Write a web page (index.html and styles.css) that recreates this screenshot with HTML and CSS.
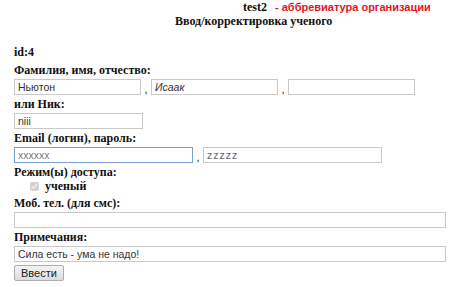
FILE: index.html
```html
<!DOCTYPE html>
<html lang="ru">
<head>
    <meta charset="UTF-8">
    <title>Ввод/корректировка ученого</title>
    <link rel="stylesheet" href="styles.css">
</head>
<body>

    <!-- Header -->
    <div class="org-line">
        <span class="org-code">test2</span>
        <span class="org-note">- аббревиатура организации</span>
    </div>
    <div class="page-title">Ввод/корректировка ученого</div>

    <!-- Scientist form -->
    <form class="sci-form">
        <div class="id-line">id:4</div>

        <div class="label">Фамилия, имя, отчество:</div>
        <div class="row">
            <input type="text" class="fld fld-name" value="Ньютон">
            <span class="sep">,</span>
            <input type="text" class="fld fld-name fld-italic" value="Исаак">
            <span class="sep">,</span>
            <input type="text" class="fld fld-name" value="">
        </div>

        <div class="label">или Ник:</div>
        <div class="row">
            <input type="text" class="fld fld-nick" value="niii">
        </div>

        <div class="label">Email (логин), пароль:</div>
        <div class="row">
            <input type="text" class="fld fld-mail focused" value="xxxxxx">
            <span class="sep">,</span>
            <input type="text" class="fld fld-mail fld-pass" value="zzzzz">
        </div>

        <div class="label">Режим(ы) доступа:</div>
        <label class="check-row">
            <input type="checkbox" checked disabled>
            <span>ученый</span>
        </label>

        <div class="label">Моб. тел. (для смс):</div>
        <div class="row">
            <input type="text" class="fld fld-wide" value="">
        </div>

        <div class="label">Примечания:</div>
        <div class="row">
            <input type="text" class="fld fld-wide" value="Сила есть - ума не надо!">
        </div>

        <button type="button" class="submit-btn">Ввести</button>
    </form>

</body>
</html>
```

FILE: styles.css
```css
/* Basic Styling */
body {
    font-family: "Liberation Serif", "Times New Roman", serif;
    font-size: 12px;
    color: #111;
    background-color: white;
    margin: 0;
    padding: 0;
}

.org-line {
    padding-left: 243px;
    padding-top: 1px;
    height: 13px;
    line-height: 13px;
    white-space: nowrap;
}

.org-code {
    font-weight: bold;
    margin-right: 5px;
}

.org-note {
    font-family: "Liberation Sans", Arial, sans-serif;
    font-size: 11px;
    font-weight: bold;
    color: #e3141c;
}

.page-title {
    padding-left: 175px;
    line-height: 14px;
    font-weight: bold;
}

.sci-form {
    padding: 0 14px;
    margin-top: 17px;
}

.id-line {
    font-weight: bold;
    line-height: 14px;
    margin-bottom: 4px;
}

.label {
    font-weight: bold;
    line-height: 14px;
}

.row {
    display: flex;
    align-items: flex-end;
    margin: 2px 0;
}

.fld {
    box-sizing: border-box;
    height: 16px;
    border: 1px solid #c9c9c9;
    padding: 0 3px;
    font-family: "Liberation Sans", Arial, sans-serif;
    font-size: 10.5px;
    color: #333;
    margin: 0;
}

.fld-name {
    width: 127px;
}

.fld-italic {
    font-style: italic;
}

.fld-nick {
    width: 129px;
}

.fld-mail {
    width: 179px;
}

.fld-pass {
    color: #666;
    letter-spacing: 1px;
}

.fld-wide {
    width: 432px;
}

.focused {
    border-color: #7a9fd0;
    color: #777;
}

.sep {
    width: 10px;
    text-align: center;
    font-family: "Liberation Sans", Arial, sans-serif;
    font-size: 11px;
    line-height: 12px;
}

.check-row {
    display: flex;
    align-items: center;
    padding-left: 16px;
    height: 14px;
    margin-bottom: 3px;
    font-weight: bold;
}

.check-row input {
    width: 9px;
    height: 9px;
    margin: 0 6px 0 0;
}

.submit-btn {
    margin-top: 1px;
    height: 16px;
    padding: 0 6px;
    font-family: "Liberation Sans", Arial, sans-serif;
    font-size: 11px;
    line-height: 14px;
    color: #222;
    border: 1px solid #adadad;
    border-radius: 2px;
    background: linear-gradient(#f4f4f4, #dcdcdc);
}
```
